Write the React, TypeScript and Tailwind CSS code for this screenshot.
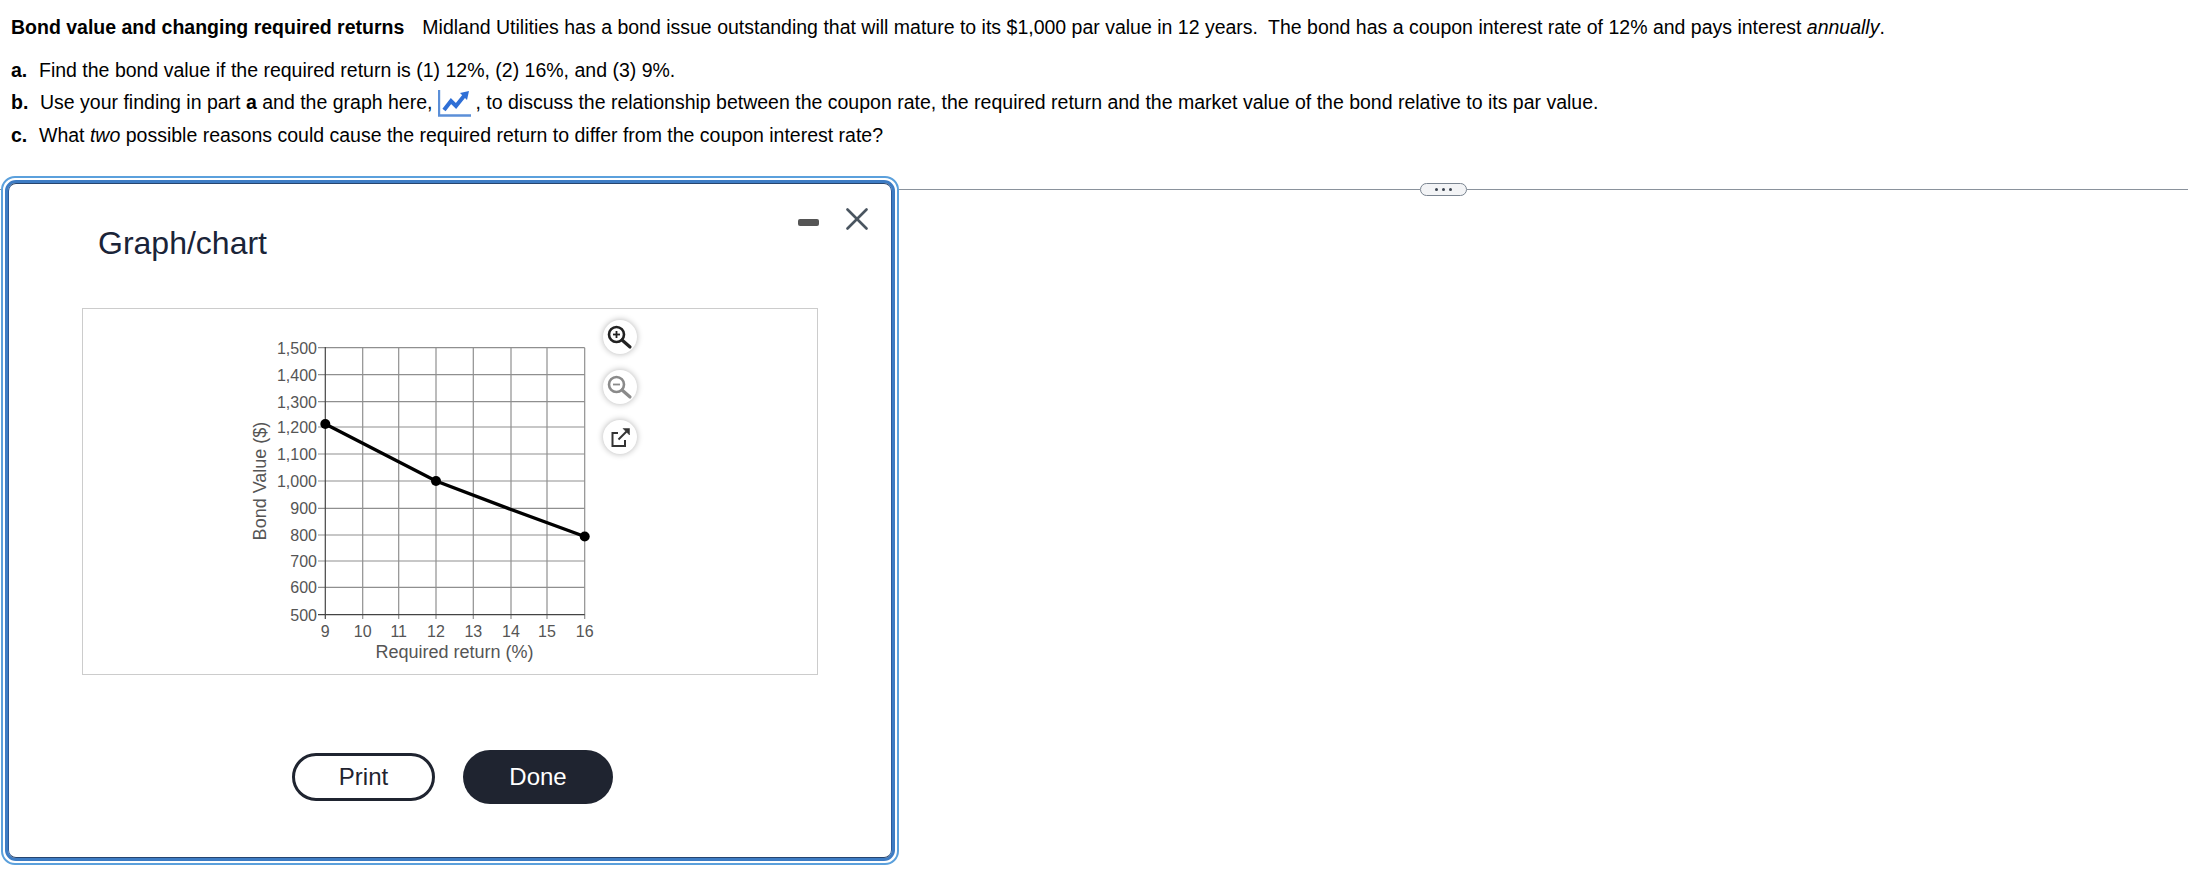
const xTicks = [
  { x: 85.3, label: "9" },
  { x: 122.7, label: "10" },
  { x: 158.7, label: "11" },
  { x: 196, label: "12" },
  { x: 233.3, label: "13" },
  { x: 271, label: "14" },
  { x: 307, label: "15" },
  { x: 344.7, label: "16" },
];

const yTicks = [
  { y: 38.7, label: "1,500" },
  { y: 65.7, label: "1,400" },
  { y: 92.7, label: "1,300" },
  { y: 118, label: "1,200" },
  { y: 145, label: "1,100" },
  { y: 172, label: "1,000" },
  { y: 199.3, label: "900" },
  { y: 226, label: "800" },
  { y: 252, label: "700" },
  { y: 278.3, label: "600" },
  { y: 305.7, label: "500" },
];

function BondChart() {
  return (
    <svg width="360" height="365" className="ml-[157px] shrink-0 text-[16px] font-['Liberation_Sans',Arial,sans-serif]">
      {xTicks.slice(1).map((t) => (
        <line key={t.x} x1={t.x} x2={t.x} y1="38.7" y2="310" stroke="#8f8f8f" strokeWidth="1.2" />
      ))}
      {yTicks.slice(0, -1).map((t) => (
        <line key={t.y} x1="78" x2="344.7" y1={t.y} y2={t.y} stroke="#8f8f8f" strokeWidth="1.2" />
      ))}
      <line x1="85.3" x2="85.3" y1="38" y2="310" stroke="#444" strokeWidth="1.2" />
      <line x1="78" x2="344.7" y1="305.7" y2="305.7" stroke="#444" strokeWidth="1.2" />
      {yTicks.map((t) => (
        <text key={t.label} x="77" y={t.y + 6} textAnchor="end" fill="#555">
          {t.label}
        </text>
      ))}
      {xTicks.map((t) => (
        <text key={t.label} x={t.x} y="328" textAnchor="middle" fill="#555">
          {t.label}
        </text>
      ))}
      <text x="214.5" y="349" textAnchor="middle" fill="#555" fontSize="18">
        Required return (%)
      </text>
      <text transform="translate(26 172) rotate(-90)" textAnchor="middle" fill="#555" fontSize="18">
        Bond Value ($)
      </text>
      <path
        d="M85.3 115 L196 172 L271 200.5 L344.7 227.5"
        fill="none"
        stroke="#000"
        strokeWidth="3.4"
      />
      <circle cx="85.3" cy="115" r="5" fill="#000" />
      <circle cx="196" cy="172" r="5" fill="#000" />
      <circle cx="344.7" cy="227.5" r="5" fill="#000" />
    </svg>
  );
}

function RoundButton({ children }: { children: React.ReactNode }) {
  return (
    <div className="flex h-[34px] w-[34px] items-center justify-center rounded-full bg-white shadow-[0_0_6px_rgba(0,0,0,0.3)]">
      {children}
    </div>
  );
}

function MagnifierIcon({ color, plus }: { color: string; plus?: boolean }) {
  return (
    <svg width="30" height="30" viewBox="0 0 30 30" fill="none" stroke={color}>
      <circle cx="11.5" cy="12.5" r="7.5" strokeWidth="2.6" />
      <line x1="17" y1="18" x2="25" y2="25" strokeWidth="3.2" strokeLinecap="round" />
      <line x1="8" y1="12.5" x2="15" y2="12.5" strokeWidth="1.8" />
      {plus && <line x1="11.5" y1="9" x2="11.5" y2="16" strokeWidth="1.8" />}
    </svg>
  );
}

export default function App() {
  return (
    <div className="h-[896px] w-[2188px] overflow-hidden bg-white text-[19.5px] leading-[22px] text-black font-['Liberation_Sans',Arial,sans-serif]">
      <div className="pl-[11px] pt-[16px]">
        <p>
          <b>Bond value and changing required returns</b>
          <span className="ml-[18px]">
            Midland Utilities has a bond issue outstanding that will mature to its $1,000 par value in 12 years.
          </span>
          <span className="ml-[10px]">The bond has a coupon interest rate of 12% and pays interest </span>
          <i>annually</i>.
        </p>
        <p className="mt-[21px] flex">
          <b className="w-[28px]">a.</b>
          <span>Find the bond value if the required return is (1) 12%, (2) 16%, and (3) 9%.</span>
        </p>
        <p className="mt-[10px] flex h-[22px] items-center">
          <b className="w-[29px]">b.</b>
          <span>
            Use your finding in part <b>a</b> and the graph here,
          </span>
          <svg width="33" height="27" viewBox="0 0 33 27" className="ml-[6px] mt-[2px] shrink-0">
            <path d="M1 0 V25.5 H33" fill="none" stroke="#5b8fd8" strokeWidth="2.4" />
            <path d="M6 20 L13 11 L18 16 L26 6" fill="none" stroke="#2f6fd6" strokeWidth="4" />
            <path d="M22 3 L31 1 L29 10 Z" fill="#2f6fd6" />
          </svg>
          <span className="ml-[4px]">, to discuss the relationship between the coupon rate, the required return and the market value of the bond relative to its par value.</span>
        </p>
        <p className="mt-[11px] flex">
          <b className="w-[28px]">c.</b>
          <span>
            What <i>two</i> possible reasons could cause the required return to differ from the coupon interest rate?
          </span>
        </p>
      </div>

      <div className="relative mt-[37px]">
        <div className="flex h-[13px] items-center">
          <div className="h-px w-[1420px] bg-[#8a929c]" />
          <div className="flex h-[13px] w-[47px] shrink-0 items-center justify-center gap-[4px] rounded-full border border-[#7a8490] bg-[#f3f4f6]">
            <span className="h-[3px] w-[3px] rounded-full bg-[#3c4450]" />
            <span className="h-[3px] w-[3px] rounded-full bg-[#3c4450]" />
            <span className="h-[3px] w-[3px] rounded-full bg-[#3c4450]" />
          </div>
          <div className="h-px flex-1 bg-[#8a929c]" />
        </div>

        <div className="absolute left-[1px] top-[-7px] h-[689px] w-[898px] rounded-[14px] border-2 border-[#5ba0dc] bg-white p-[2px]">
          <div className="h-full rounded-[11px] border-[3px] border-[#3d7cc4]">
            <div className="relative h-full rounded-[8px] border border-x-[#2a5a9a] border-y-[#26456f] bg-white pl-[73px]">
              <div className="absolute right-[23px] top-[24px] flex items-center gap-[27px]">
                <div className="mt-[6px] h-[7px] w-[21px] rounded-[2px] bg-[#555]" />
                <svg width="22" height="22" viewBox="0 0 22 22" stroke="#4a5560" strokeWidth="2.6" strokeLinecap="round">
                  <line x1="1.5" y1="1.5" x2="20.5" y2="20.5" />
                  <line x1="20.5" y1="1.5" x2="1.5" y2="20.5" />
                </svg>
              </div>

              <h2 className="pl-[16px] pt-[41px] text-[32px] leading-[37px] text-[#1a2438]">Graph/chart</h2>

              <div className="mt-[46px] flex h-[367px] w-[736px] border border-[#cccccc]">
                <BondChart />
                <div className="ml-[3px] flex flex-col gap-[16px] pt-[11px]">
                  <RoundButton>
                    <MagnifierIcon color="#222" plus />
                  </RoundButton>
                  <RoundButton>
                    <MagnifierIcon color="#8a8a8a" />
                  </RoundButton>
                  <RoundButton>
                    <svg width="24" height="24" viewBox="0 0 24 24" fill="none" stroke="#333" strokeWidth="2">
                      <path d="M10 8 H4.5 V21 H17 V15" />
                      <path d="M10.5 14.5 L18.5 6.5" />
                      <path d="M15 3.5 H21.5 V10 Z" fill="#333" strokeWidth="0.5" />
                    </svg>
                  </RoundButton>
                </div>
              </div>

              <div className="mt-[75px] flex items-center gap-[28px] pl-[210px] text-[24px]">
                <div className="flex h-[48px] w-[143px] items-center justify-center rounded-[24px] border-[3px] border-[#1f2430] text-[#1f2430]">
                  Print
                </div>
                <div className="flex h-[54px] w-[150px] items-center justify-center rounded-[27px] bg-[#1f2430] text-white">
                  Done
                </div>
              </div>
            </div>
          </div>
        </div>
      </div>
    </div>
  );
}
